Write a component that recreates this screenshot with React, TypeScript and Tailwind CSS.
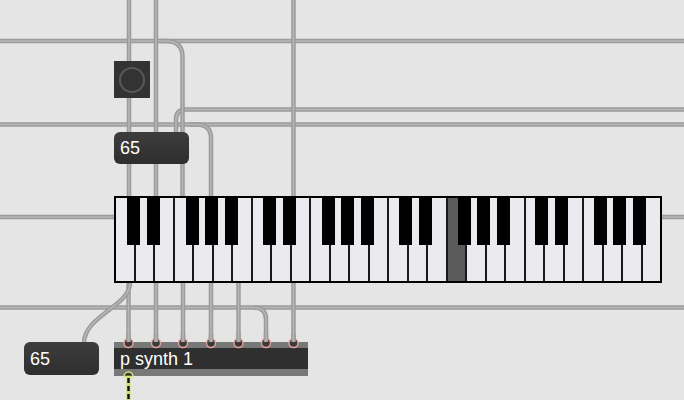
import React from "react";

// patch cords: [d] paths in page coordinates
const cords = [
  "M0 41 H684",
  "M0 124.5 H684",
  "M684 109.5 H186 Q176 109.5 176 119.5 V132",
  "M156 41 H166 Q182.5 41 182.5 57 V196",
  "M190 124.5 H197 Q211 124.5 211 138.5 V196",
  "M0 217 H114",
  "M661 217 H684",
  "M0 307.5 H684",
  "M129 0 V196",
  "M156 0 V196",
  "M293.5 0 V196",
  "M128.5 283 V344",
  "M156 283 V344",
  "M183 283 V344",
  "M211 283 V344",
  "M238.5 283 V344",
  "M254 307.5 Q266 307.5 266 319.5 V344",
  "M293.5 283 V344",
  "M130 283 C130 306 84 316 84 343",
];

const inlets = [128.5, 156, 183, 211, 238.5, 266, 293.5];

const WHITE = 28;
const KEY_W = 544 / WHITE;
// black key positions as white-key boundaries inside one octave
const blackOffsets = [1, 2, 4, 5, 6];
const HILITE = 17;

function Cord({ d }: { d: string }) {
  return (
    <>
      <path d={d} fill="none" stroke="#9b9b9b" strokeWidth={4.5} />
      <path d={d} fill="none" stroke="#b6b6b6" strokeWidth={1.6} />
    </>
  );
}

function NumberBox({ value, className }: { value: string; className: string }) {
  return (
    <div
      className={`absolute flex items-center rounded-[6px] bg-gradient-to-b from-[#3d3d3d] to-[#2e2e2e] pl-[6px] text-[18px] leading-none text-white ${className}`}
    >
      {value}
    </div>
  );
}

function Keyboard() {
  const blacks: number[] = [];
  for (let o = 0; o < 4; o++) {
    blackOffsets.forEach((b) => blacks.push((o * 7 + b) * KEY_W - 8));
  }
  return (
    <div className="absolute left-[114px] top-[196px] h-[87px] w-[548px] border-2 border-black bg-black">
      <div className="relative flex h-full w-full">
        {Array.from({ length: WHITE }).map((_, i) => (
          <div
            key={i}
            className={`h-full flex-1 ${i > 0 ? "border-l-2 border-[#1a1a1a]" : ""} ${
              i === HILITE ? "bg-[#5a5a5a]" : "bg-[#eaeaef]"
            }`}
          />
        ))}
        {blacks.map((x, i) => (
          <div
            key={i}
            className="absolute top-0 h-[47px] w-[13px] bg-black"
            style={{ left: x }}
          />
        ))}
      </div>
    </div>
  );
}

export default function App() {
  return (
    <div
      className="relative h-[400px] w-[684px] overflow-hidden bg-[#e5e5e5]"
      style={{ fontFamily: '"Liberation Sans", Arial, sans-serif' }}
    >
      <svg className="absolute inset-0" width={684} height={400}>
        {cords.map((d, i) => (
          <Cord key={i} d={d} />
        ))}
        <path d="M128.5 376 V400" stroke="#cbdc6c" strokeWidth={4} />
        <path d="M128.5 378 V400" stroke="#111" strokeWidth={2.4} strokeDasharray="5 3" />
      </svg>

      {/* toggle */}
      <div className="absolute left-[114px] top-[61px] flex h-[37px] w-[36px] items-center justify-center bg-[#333333]">
        <div className="h-[26px] w-[26px] rounded-full border-[2.5px] border-[#585858]" />
      </div>

      <NumberBox value="65" className="left-[114px] top-[132px] h-[32px] w-[75px]" />

      <Keyboard />

      <NumberBox value="65" className="left-[24px] top-[342px] h-[33px] w-[75px]" />

      {/* p synth 1 */}
      <div className="absolute left-[114px] top-[342px] flex h-[34px] w-[194px] flex-col">
        <div className="h-[6px] bg-[#787878]" />
        <div className="flex flex-1 items-center bg-[#2f2f2f] pl-[6px] text-[18px] leading-none text-white">
          p synth 1
        </div>
        <div className="h-[7px] bg-[#787878]" />
      </div>

      <svg className="absolute inset-0" width={684} height={400}>
        {inlets.map((x, i) => (
          <g key={i}>
            <circle cx={x} cy={343} r={4.5} fill="#3a3a3a" stroke="#eaa59e" strokeWidth={1.4} />
            <Cord d={`M${x} 334 V342`} />
          </g>
        ))}
        <path
          d="M124 376.5 A4.5 4.5 0 0 1 133 376.5 Z"
          fill="#3a3a3a"
          stroke="#d7e27a"
          strokeWidth={1.4}
        />
      </svg>
    </div>
  );
}
